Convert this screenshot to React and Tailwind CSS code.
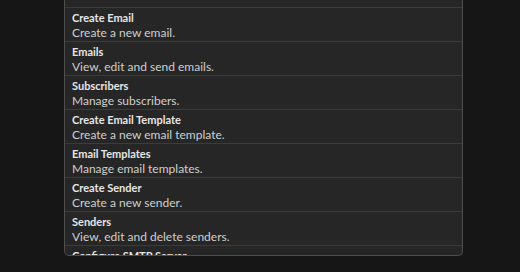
import React from 'react';

const ITEMS = [
  { title: 'Create Email', desc: 'Create a new email.' },
  { title: 'Emails', desc: 'View, edit and send emails.' },
  { title: 'Subscribers', desc: 'Manage subscribers.' },
  { title: 'Create Email Template', desc: 'Create a new email template.' },
  { title: 'Email Templates', desc: 'Manage email templates.' },
  { title: 'Create Sender', desc: 'Create a new sender.' },
  { title: 'Senders', desc: 'View, edit and delete senders.' },
  { title: 'Configure SMTP Server' },
];

export default function App() {
  return (
    <div className="h-[272px] w-[520px] overflow-hidden bg-[#161616] pl-[64px] font-['Lato','Liberation_Sans',sans-serif]">
      <div className="w-[399px] h-[256px] overflow-hidden rounded-b-[5px] border-x border-b border-[#4d4d4d] bg-[#262626]">
        {/* tail of the row scrolled above */}
        <div className="h-[7px]" />
        {ITEMS.map((item) => (
          <div key={item.title} className="h-[34px] border-t border-[#3c3c3c] px-[7px] pt-[3px]">
            <div className="text-[11px] leading-[14px] font-bold text-[#e6e6e6]">{item.title}</div>
            {item.desc && <div className="text-[12px] leading-[16px] text-[#cfcfcf]">{item.desc}</div>}
          </div>
        ))}
      </div>
    </div>
  );
}
